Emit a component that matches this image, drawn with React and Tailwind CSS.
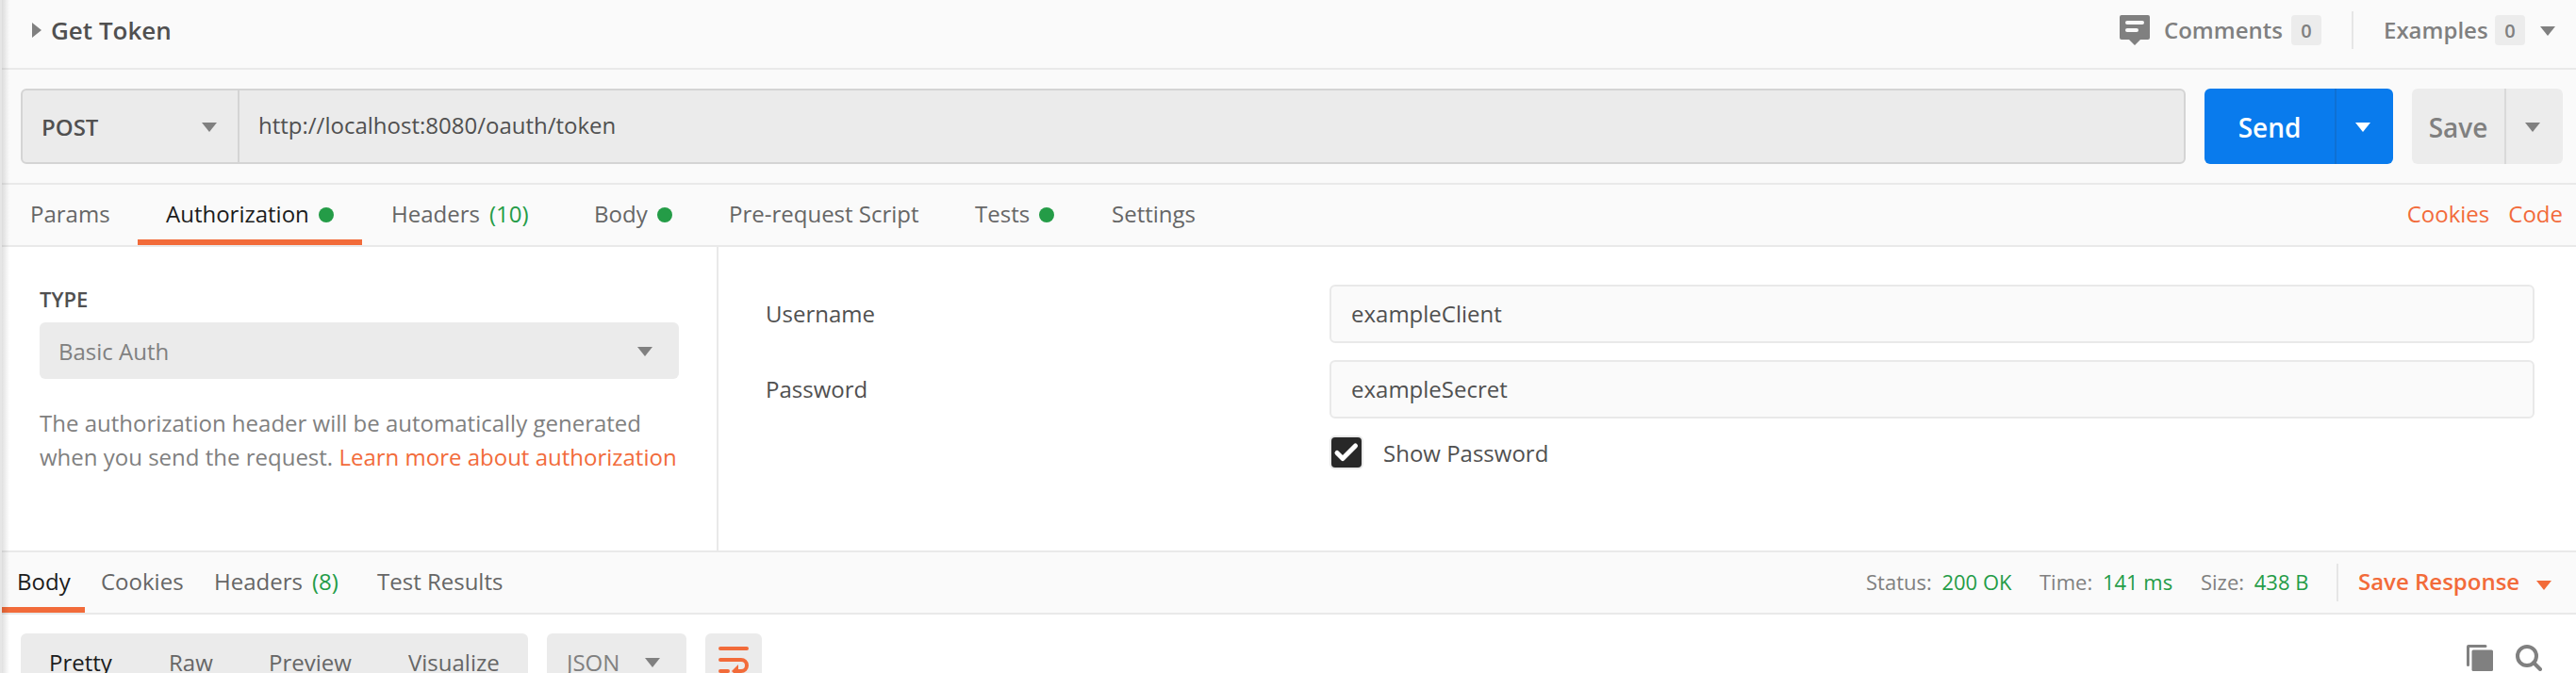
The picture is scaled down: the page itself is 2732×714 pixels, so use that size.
const INK = "text-[#505050]";

function Caret({ className = "" }) {
  return (
    <svg width="16" height="10" viewBox="0 0 16 10" className={`shrink-0 fill-current ${className}`}>
      <path d="M0 0h16L8 10z" />
    </svg>
  );
}

function Dot() {
  return <span className="mt-[3px] ml-[10px] size-4 shrink-0 rounded-full bg-[#249c47]" />;
}

function Tab({ label, count, dot, active, className = "" }) {
  return (
    <div
      className={`flex h-full items-center border-b-[6px] pt-[3px] ${active ? "border-[#f26b3a] text-[#1c1c1c]" : "border-transparent text-[#666]"} ${className}`}
    >
      <span>{label}</span>
      {count && <span className="ml-2.5 text-[#249c47]">{count}</span>}
      {dot && <Dot />}
    </div>
  );
}

function Badge({ children }) {
  return (
    <span className="flex size-8 items-center justify-center rounded bg-[#ececec] text-[20px] font-semibold">
      {children}
    </span>
  );
}

function TitleBar() {
  return (
    <div className="flex h-[74px] items-center border-b-2 border-[#e9e9e9] pr-[22px] pl-[34px]">
      <svg width="10" height="16" viewBox="0 0 10 16" className="mt-[-8px] fill-[#808080]">
        <path d="M0 0l10 8-10 8z" />
      </svg>
      <h1 className="mt-[-8px] ml-[10px] text-[26px] font-semibold text-[#505050]">Get Token</h1>
      <div className="mt-[-8px] ml-auto flex items-center font-semibold text-[#808080]">
        <svg width="32" height="32" viewBox="0 0 32 32">
          <path d="M2 0h28q2 0 2 2v22q0 2-2 2h-8l-6 6-6-6H2q-2 0-2-2V2q0-2 2-2z" className="fill-[#808080]" />
          <path d="M8 8h16M8 16h10" className="stroke-[#fafafa] stroke-4" strokeLinecap="round" />
        </svg>
        <span className="mt-[-2px] ml-[15px] w-[135px]">Comments</span>
        <Badge>0</Badge>
        <span className="mr-8 ml-8 h-10 w-0.5 bg-[#e6e6e6]" />
        <span className="mt-[-2px] w-[118px]">Examples</span>
        <Badge>0</Badge>
        <Caret className="mt-[2px] ml-4" />
      </div>
    </div>
  );
}

function UrlBar() {
  return (
    <div className="flex h-[122px] items-center gap-5 border-b-2 border-[#e9e9e9] pr-[14px] pl-[22px]">
      <div className="flex h-20 flex-1 rounded-md border-2 border-[#d4d4d4] bg-[#ebebeb]">
        <div className="flex w-[230px] items-center justify-between border-r-2 border-[#d4d4d4] pr-[22px] pl-[20px]">
          <span className="mt-[1px] font-semibold text-[#505050]">POST</span>
          <Caret className="mt-[2px] text-[#808080]" />
        </div>
        <span className="mt-[20px] ml-[20px] leading-[33px] text-[#505050]">http://localhost:8080/oauth/token</span>
      </div>
      <div className="flex h-20 w-[200px] overflow-hidden rounded-md bg-[#097bed] text-white">
        <span className="flex flex-1 items-center justify-center border-r-2 border-[#0e70d3] pt-[2px] text-[28px] font-semibold">Send</span>
        <span className="flex w-[60px] items-center justify-center pr-1">
          <Caret className="mt-[2px]" />
        </span>
      </div>
      <div className="flex h-20 w-[160px] overflow-hidden rounded-md bg-[#ececec] text-[#808080]">
        <span className="flex flex-1 items-center justify-center border-r-2 border-[#d9d9d9] pt-[2px] text-[28px] font-semibold">Save</span>
        <span className="flex w-[60px] items-center justify-center pr-1">
          <Caret className="mt-[2px]" />
        </span>
      </div>
    </div>
  );
}

function RequestTabs() {
  return (
    <div className="flex h-[66px] items-center border-b-2 border-[#e9e9e9] pr-[14px]">
      <Tab label="Params" className="w-[146px] pl-[32px]" />
      <Tab label="Authorization" dot active className="w-[238px] pl-[30px]" />
      <Tab label="Headers" count="(10)" className="w-[215px] pl-[31px]" />
      <Tab label="Body" dot className="w-[145px] pl-[31px]" />
      <Tab label="Pre-request Script" className="w-[260px] pl-[29px]" />
      <Tab label="Tests" dot className="w-[144px] pl-[30px]" />
      <Tab label="Settings" className="pl-[31px]" />
      <div className="mt-[-3px] ml-auto flex gap-5 text-[#f26b3a]">
        <span>Cookies</span>
        <span>Code</span>
      </div>
    </div>
  );
}

function Field({ label, value }) {
  return (
    <div className="flex items-center">
      <span className="w-[598px] pb-[2px]">{label}</span>
      <span className="flex h-[62px] w-[1278px] items-center rounded-md border-2 border-[#e9e9e9] bg-[#fafafa] pb-[2px] pl-[21px]">
        {value}
      </span>
    </div>
  );
}

function AuthPanel() {
  return (
    <div className="flex h-[322px] bg-white">
      <div className="w-[762px] border-r-2 border-[#e9e9e9] pt-[40px] pl-[42px]">
        <div className="text-[22px] leading-[30px] font-semibold text-[#505050]">TYPE</div>
        <div className="mt-[10px] flex h-[60px] w-[678px] items-center justify-between rounded-md bg-[#ebebeb] pr-7 pl-5 text-[#808080]">
          <span>Basic Auth</span>
          <Caret className="mt-[2px]" />
        </div>
        <p className="mt-[29px] leading-9 whitespace-nowrap text-[#808080]">
          The authorization header will be automatically generated
          <br />
          when you send the request. <a className="text-[#f26b3a]">Learn more about authorization</a>
        </p>
      </div>
      <div className={`flex flex-col gap-[18px] pt-10 pl-[50px] ${INK}`}>
        <Field label="Username" value="exampleClient" />
        <Field label="Password" value="exampleSecret" />
        <div className="flex h-9 items-center pl-[598px]">
          <svg width="36" height="36" viewBox="0 0 36 36">
            <rect width="36" height="36" rx="6" className="fill-[#e9e9e9]" />
            <rect x="2" y="2" width="32" height="32" rx="4" className="fill-[#282828]" />
            <path d="M8 18.5l6 6L27.5 11" fill="none" className="stroke-white stroke-5" strokeLinecap="round" strokeLinejoin="round" />
          </svg>
          <span className="ml-[21px]">Show Password</span>
        </div>
      </div>
    </div>
  );
}

function Meta({ label, value, className = "" }) {
  return (
    <span className={`mt-[-2px] text-[22px] text-[#808080] ${className}`}>
      {label} <span className="ml-[5px] text-[#249c47]">{value}</span>
    </span>
  );
}

function ResponseTabs() {
  return (
    <div className="flex h-[68px] items-center border-y-2 border-[#e9e9e9]">
      <Tab label="Body" active className="ml-[2px] w-[88px] pl-4" />
      <Tab label="Cookies" className="w-[120px] pl-[17px]" />
      <Tab label="Headers" count="(8)" className="w-[174px] pl-[17px]" />
      <Tab label="Test Results" className="pl-4" />
      <div className="ml-auto flex items-center">
        <Meta label="Status:" value="200 OK" className="w-[184px]" />
        <Meta label="Time:" value="141 ms" className="w-[171px]" />
        <Meta label="Size:" value="438 B" className="w-[144px]" />
        <span className="h-10 w-0.5 bg-[#e6e6e6]" />
        <span className="mt-[-3px] ml-[21px] w-[189px] font-semibold text-[#f26b3a]">Save Response</span>
        <Caret className="mt-[6px] mr-[26px] text-[#f26b3a]" />
      </div>
    </div>
  );
}

function ResponseToolbar() {
  return (
    <div className="flex h-[62px] items-start overflow-hidden bg-white pt-5 pl-[22px]">
      <div className="flex h-[60px] w-[538px] items-center rounded-md bg-[#ebebeb] pl-[30px] text-[#666]">
        <span className="w-[127px] text-[#1c1c1c]">Pretty</span>
        <span className="w-[106px]">Raw</span>
        <span className="w-[148px]">Preview</span>
        <span>Visualize</span>
      </div>
      <div className="ml-5 flex h-[60px] w-[148px] items-center justify-between rounded-md bg-[#ebebeb] pr-7 pl-[21px] text-[#808080]">
        <span>JSON</span>
        <Caret className="mt-[2px]" />
      </div>
      <div className="ml-5 flex h-[60px] w-[60px] items-start justify-center rounded-md bg-[#ebebeb] pt-[14px]">
        <svg width="32" height="32" viewBox="0 0 32 32" fill="none" className="stroke-[#f26b3a] stroke-4" strokeLinecap="round">
          <path d="M2 2h28M2 14h22a6 6 0 0 1 0 12h-4M2 26h8" />
          <path d="M21 19l-7 7 7 7z" className="fill-[#f26b3a] stroke-none" />
        </svg>
      </div>
      <div className="mt-3 mr-9 ml-auto flex gap-6">
        <svg width="28" height="28" viewBox="0 0 28 28" className="fill-[#808080]">
          <path d="M2 0h18q1.500 0 1.500 1.500T20 3H3v18.500Q3 23 1.500 23T0 21.500V2q0-2 2-2z" />
          <rect x="5.500" y="5.500" width="22.500" height="22.500" rx="1.500" />
        </svg>
        <svg width="28" height="28" viewBox="0 0 28 28" fill="none" className="stroke-[#808080] stroke-4">
          <circle cx="12" cy="12" r="10" />
          <path d="M19 19l7 7" strokeLinecap="round" />
        </svg>
      </div>
    </div>
  );
}

export default function App() {
  return (
    <div className="relative flex h-[714px] w-[2732px] flex-col overflow-hidden bg-[#fafafa] font-['Open_Sans',sans-serif] text-[24px] leading-[33px]">
      <TitleBar />
      <UrlBar />
      <RequestTabs />
      <AuthPanel />
      <ResponseTabs />
      <ResponseToolbar />
      <div className="absolute inset-y-0 left-0 flex">
        <div className="w-0.5 bg-[#e6e6e6]" />
        <div className="w-2 bg-linear-to-r from-black/12 to-transparent" />
      </div>
    </div>
  );
}
